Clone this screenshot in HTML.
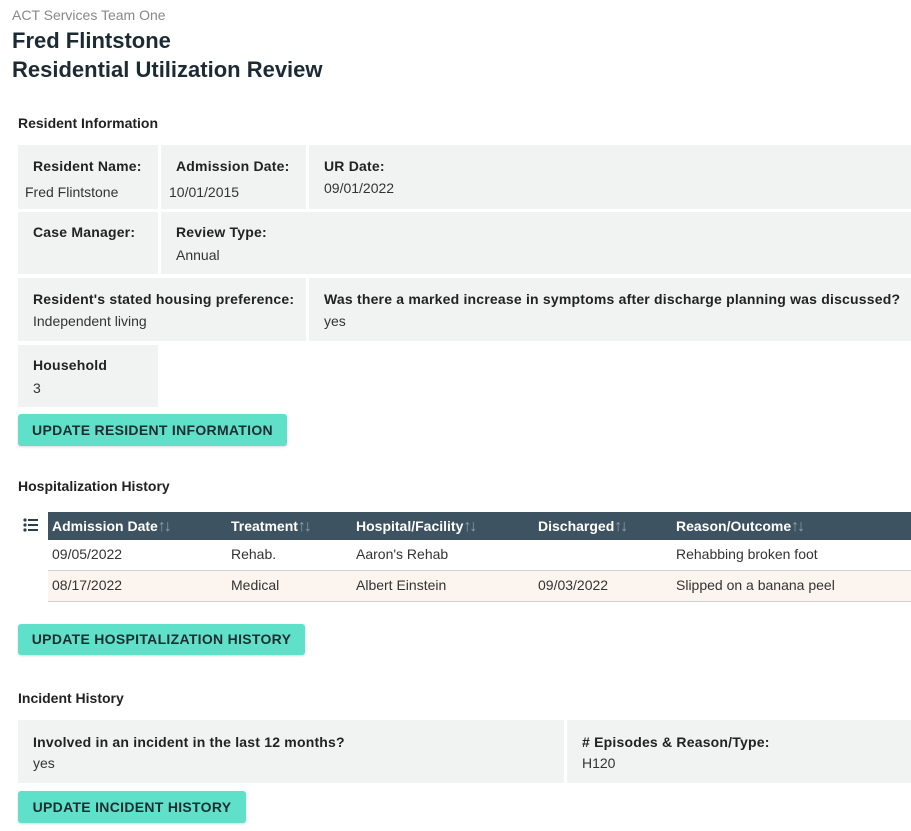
<!DOCTYPE html>
<html><head><style>
body{margin:0;width:911px;height:831px;background:#fff;font-family:"Liberation Sans",Arial,sans-serif;position:relative;overflow:hidden;color:#222}
.a{position:absolute;white-space:nowrap}
.c{position:absolute;background:#f1f3f3}
.l{font-size:14px;font-weight:bold;color:#222;letter-spacing:.2px}
.v{font-size:14px;color:#333}
.h{font-size:14px;font-weight:bold;color:#222}
.btn{position:absolute;background:#5fe0c9;border-radius:3px;font-size:14px;font-weight:bold;color:#1f2d33;letter-spacing:.3px;text-align:center;line-height:32px;box-shadow:0 1px 2px rgba(0,0,0,.15)}
.th{position:absolute;top:512px;height:28px;left:48px;right:0;background:#3e5361}
.tc{position:absolute;font-size:14px;color:#fff;font-weight:bold;line-height:28px}
.tc span{color:#8aa0ad;font-weight:normal;font-size:16px;letter-spacing:-2px}
.td{position:absolute;font-size:14px;color:#333}
</style></head><body>
<div class="a" style="left:12px;top:7px;font-size:14px;color:#888">ACT Services Team One</div>
<div class="a" style="left:12px;top:28px;font-size:22px;font-weight:bold;color:#1c2b33">Fred Flintstone</div>
<div class="a" style="left:12px;top:57px;font-size:22px;font-weight:bold;color:#1c2b33">Residential Utilization Review</div>

<div class="a h" style="left:18px;top:115px">Resident Information</div>
<div class="c" style="left:18px;top:145px;width:140px;height:64px"></div>
<div class="c" style="left:161px;top:145px;width:145px;height:64px"></div>
<div class="c" style="left:309px;top:145px;width:602px;height:64px"></div>
<div class="c" style="left:18px;top:212px;width:140px;height:62px"></div>
<div class="c" style="left:161px;top:212px;width:750px;height:62px"></div>
<div class="c" style="left:18px;top:278px;width:288px;height:63px"></div>
<div class="c" style="left:309px;top:278px;width:602px;height:63px"></div>
<div class="c" style="left:18px;top:345px;width:140px;height:62px"></div>

<div class="a l" style="left:33px;top:158px">Resident Name:</div>
<div class="a v" style="left:25px;top:184px">Fred Flintstone</div>
<div class="a l" style="left:176px;top:158px">Admission Date:</div>
<div class="a v" style="left:169px;top:184px">10/01/2015</div>
<div class="a l" style="left:324px;top:158px">UR Date:</div>
<div class="a v" style="left:324px;top:180px">09/01/2022</div>
<div class="a l" style="left:33px;top:224px">Case Manager:</div>
<div class="a l" style="left:176px;top:224px">Review Type:</div>
<div class="a v" style="left:176px;top:247px">Annual</div>
<div class="a l" style="left:33px;top:291px">Resident's stated housing preference:</div>
<div class="a v" style="left:33px;top:313px">Independent living</div>
<div class="a l" style="left:324px;top:291px">Was there a marked increase in symptoms after discharge planning was discussed?</div>
<div class="a v" style="left:324px;top:313px">yes</div>
<div class="a l" style="left:33px;top:357px">Household</div>
<div class="a v" style="left:33px;top:380px">3</div>
<div class="btn" style="left:18px;top:414px;width:269px;height:32px">UPDATE RESIDENT INFORMATION</div>

<div class="a h" style="left:18px;top:478px">Hospitalization History</div>
<svg class="a" style="left:23px;top:518px" width="15" height="14" viewBox="0 0 15 14"><g fill="#2c3e48"><circle cx="2" cy="2" r="1.6"/><circle cx="2" cy="7" r="1.6"/><circle cx="2" cy="12" r="1.6"/><rect x="5" y="1" width="10" height="2"/><rect x="5" y="6" width="10" height="2"/><rect x="5" y="11" width="10" height="2"/></g></svg>
<div class="th"></div>
<div class="tc" style="left:52px;top:512px">Admission Date<span>↑↓</span></div>
<div class="tc" style="left:231px;top:512px">Treatment<span>↑↓</span></div>
<div class="tc" style="left:356px;top:512px">Hospital/Facility<span>↑↓</span></div>
<div class="tc" style="left:538px;top:512px">Discharged<span>↑↓</span></div>
<div class="tc" style="left:676px;top:512px">Reason/Outcome<span>↑↓</span></div>
<div class="a" style="left:48px;right:0;top:570px;height:1px;background:#cfcfd3"></div>
<div class="a" style="left:48px;right:0;top:571px;height:30px;background:#fcf4ee;border-bottom:1px solid #cfcfd3"></div>
<div class="td" style="left:52px;top:546px">09/05/2022</div>
<div class="td" style="left:231px;top:546px">Rehab.</div>
<div class="td" style="left:356px;top:546px">Aaron's Rehab</div>
<div class="td" style="left:676px;top:546px">Rehabbing broken foot</div>
<div class="td" style="left:52px;top:577px">08/17/2022</div>
<div class="td" style="left:231px;top:577px">Medical</div>
<div class="td" style="left:356px;top:577px">Albert Einstein</div>
<div class="td" style="left:538px;top:577px">09/03/2022</div>
<div class="td" style="left:676px;top:577px">Slipped on a banana peel</div>
<div class="btn" style="left:18px;top:624px;width:287px;height:31px;line-height:30px">UPDATE HOSPITALIZATION HISTORY</div>

<div class="a h" style="left:18px;top:690px">Incident History</div>
<div class="c" style="left:18px;top:720px;width:546px;height:63px"></div>
<div class="c" style="left:567px;top:720px;width:344px;height:63px"></div>
<div class="a l" style="left:33px;top:734px">Involved in an incident in the last 12 months?</div>
<div class="a v" style="left:33px;top:755px">yes</div>
<div class="a l" style="left:582px;top:734px"># Episodes &amp; Reason/Type:</div>
<div class="a v" style="left:582px;top:755px">H120</div>
<div class="btn" style="left:18px;top:791px;width:228px;height:32px">UPDATE INCIDENT HISTORY</div>
</body></html>
